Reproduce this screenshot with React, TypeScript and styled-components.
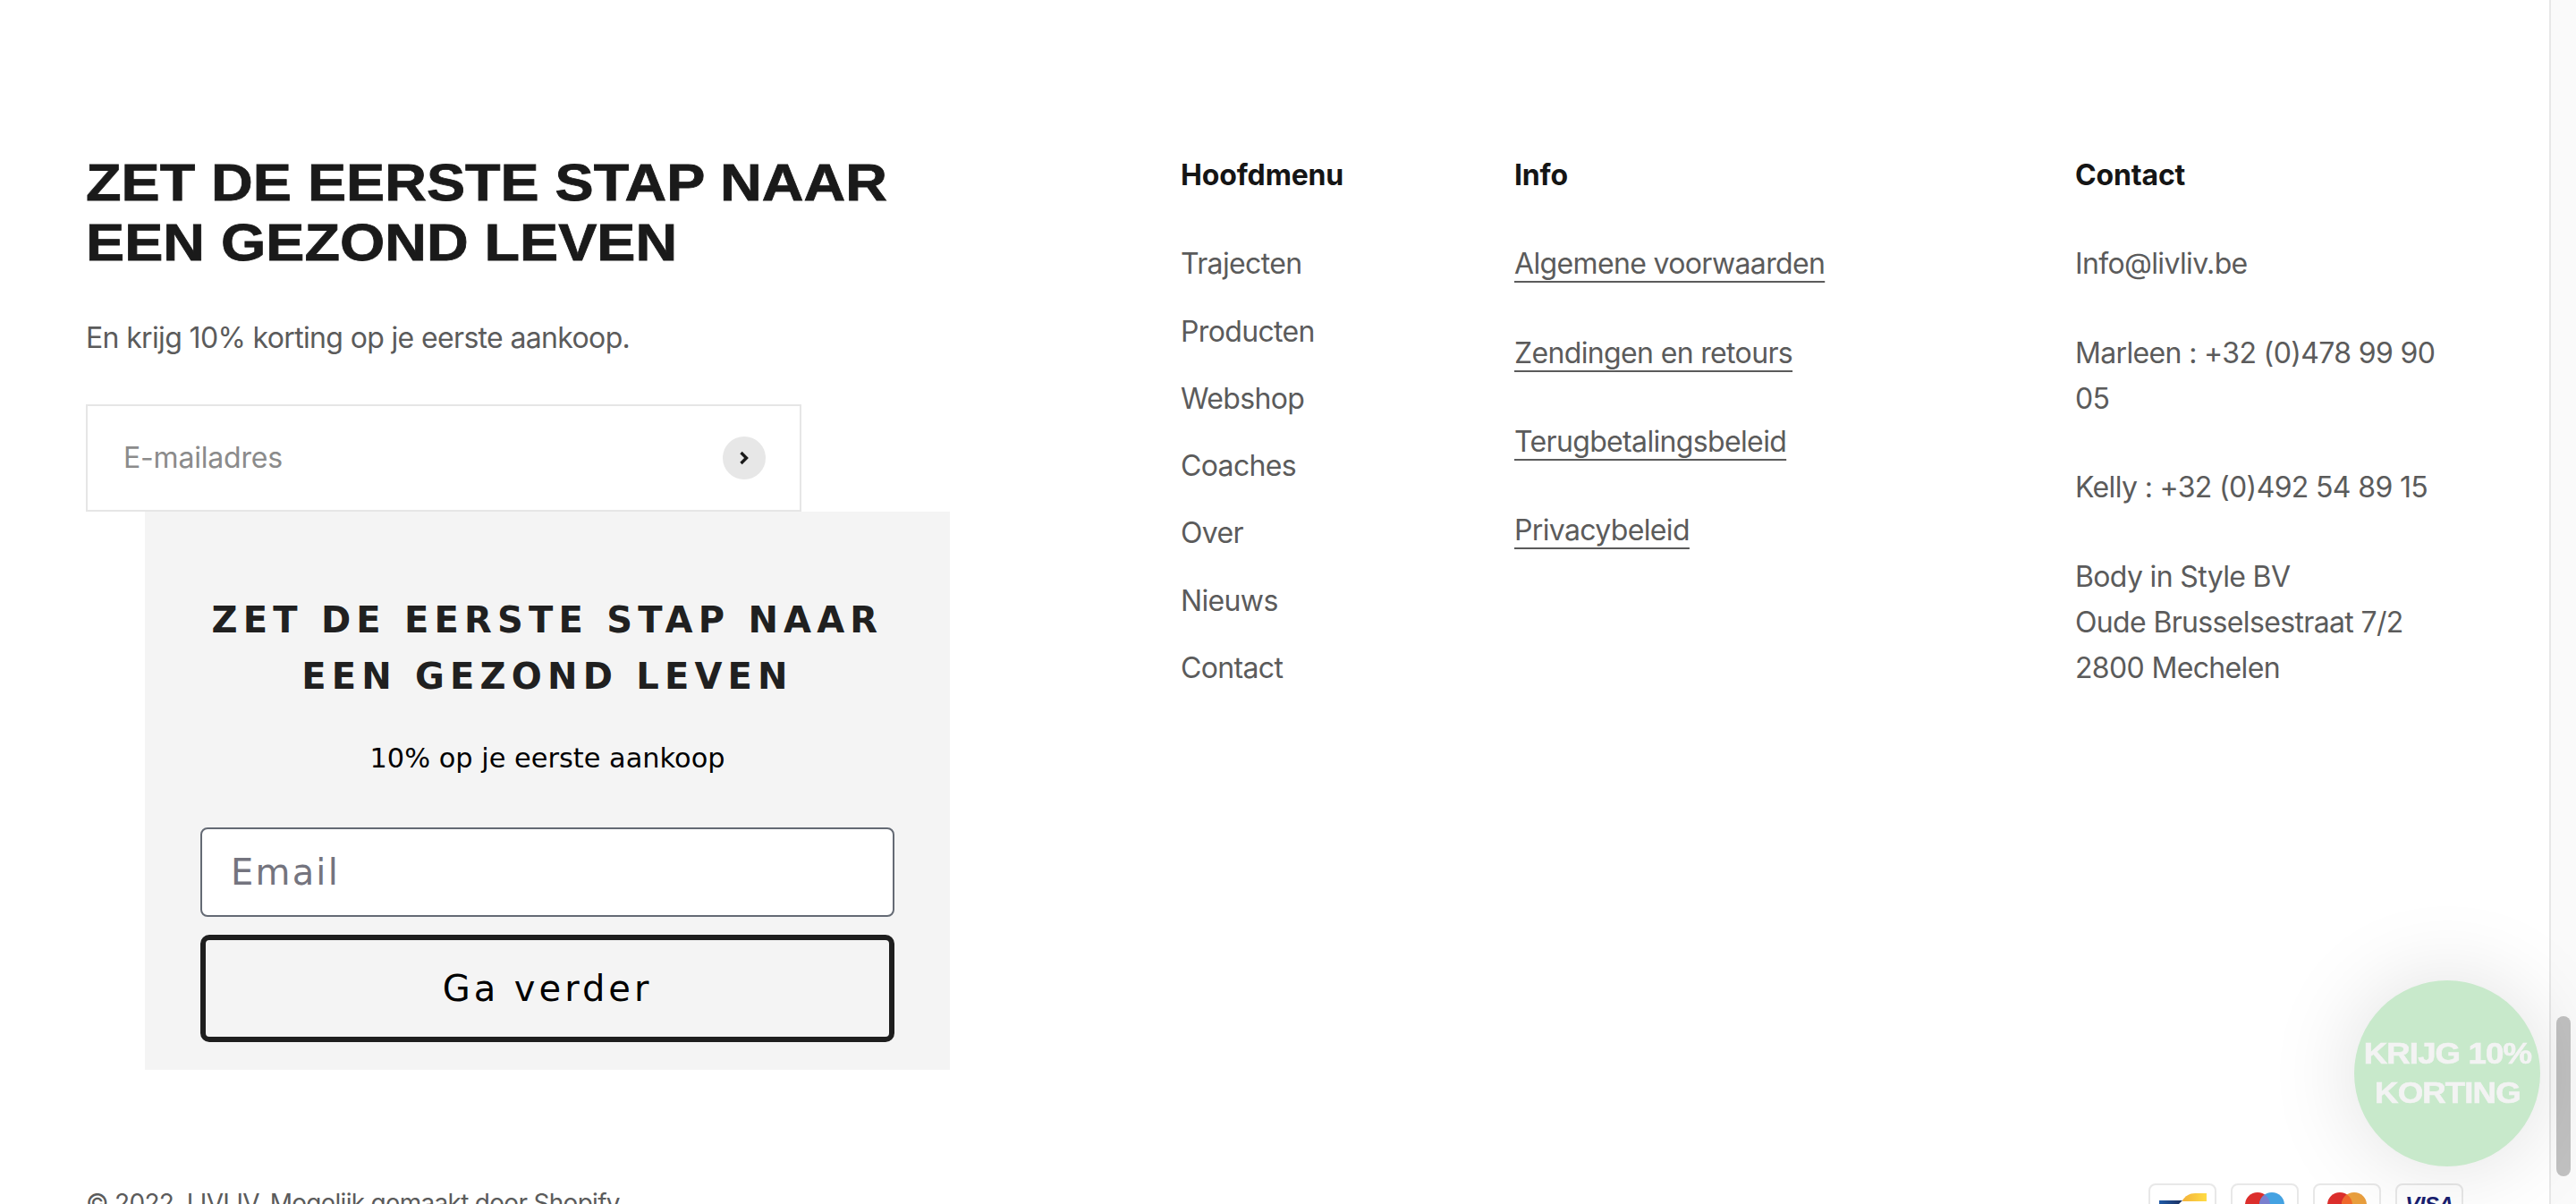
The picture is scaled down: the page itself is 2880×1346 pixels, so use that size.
import React from "react";
import styled, { createGlobalStyle } from "styled-components";

const Global = createGlobalStyle`
  html, body { margin: 0; padding: 0; height: 1346px; overflow: hidden; background: #fff; }
  * { box-sizing: border-box; }
  body { font-family: Inter, "Liberation Sans", sans-serif; }
`;

const Viewport = styled.div`
  display: flex;
  width: 2880px;
  height: 1346px;
  overflow: hidden;
`;
const Main = styled.main`
  width: 2850px;
  flex: none;
  padding: 170px 96px 0;
  font-size: 32px;
  line-height: 51.2px;
  letter-spacing: -0.65px;
  color: #5b5b5b;
`;
const Columns = styled.div`
  display: flex;
  align-items: flex-start;
`;
const Newsletter = styled.section`
  width: 1224px;
  flex: none;
`;
const BigHeading = styled.h2`
  margin: 0;
  font-family: "Liberation Sans", Arial, sans-serif;
  font-weight: 700;
  font-size: 58px;
  line-height: 67.2px;
  letter-spacing: 0;
  color: #1a1a1a;
  -webkit-text-stroke: 0.8px #1a1a1a;
  transform: scaleX(1.115);
  transform-origin: left center;
  white-space: nowrap;
`;
const Lead = styled.p`
  margin: 48px 0 48px;
`;
const SignupBox = styled.form`
  width: 800px;
  height: 120px;
  border: 2px solid #e6e6e6;
  display: flex;
  align-items: center;
  justify-content: space-between;
  padding: 0 38px 0 38px;
`;
const SignupInput = styled.input`
  flex: 1;
  border: 0;
  outline: 0;
  padding: 0 2px;
  background: transparent;
  font: inherit;
  color: #5b5b5b;
  letter-spacing: -0.2px;
  &::placeholder { color: #8b8b8b; opacity: 1; }
`;
const RoundSubmit = styled.button`
  width: 48px;
  height: 48px;
  flex: none;
  border: 0;
  padding: 0;
  border-radius: 50%;
  background: #e7e7e7;
  display: flex;
  align-items: center;
  justify-content: center;
`;
const Popup = styled.div`
  width: 900px;
  height: 624px;
  margin-left: 66px;
  background: #f4f4f4;
  padding: 90px 62px 0;
  font-family: "DejaVu Sans", Verdana, sans-serif;
  text-align: center;
`;
const PopupTitle = styled.h3`
  margin: 0;
  font-size: 40px;
  line-height: 63px;
  font-weight: 700;
  letter-spacing: 6.2px;
  color: #202020;
  white-space: nowrap;
`;
const PopupSub = styled.p`
  margin: 35px 0 0;
  font-size: 30.4px;
  line-height: 50px;
  letter-spacing: 0;
  color: #000;
  white-space: nowrap;
`;
const PopupInput = styled.input`
  display: block;
  width: 100%;
  height: 100px;
  margin-top: 52px;
  padding: 0 32px;
  border: 2px solid #646a74;
  border-radius: 8px;
  background: #fff;
  font-family: inherit;
  font-size: 40px;
  letter-spacing: 2.2px;
  outline: 0;
  &::placeholder { color: #74747e; opacity: 1; }
`;
const PopupButton = styled.button`
  display: block;
  width: 100%;
  height: 120px;
  margin-top: 20px;
  border: 6px solid #1e1e1e;
  border-radius: 10px;
  background: transparent;
  font-family: inherit;
  font-size: 40px;
  letter-spacing: 4px;
  color: #000;
`;
const LinkColumn = styled.nav<{ $width: number }>`
  width: ${(p) => p.$width}px;
  flex: none;
`;
const ColumnTitle = styled.h4`
  margin: 0 0 48px;
  font-size: 32px;
  line-height: 51.2px;
  font-weight: 700;
  letter-spacing: -0.15px;
  color: #151515;
`;
const List = styled.div<{ $gap: number }>`
  display: flex;
  flex-direction: column;
  align-items: flex-start;
  gap: ${(p) => p.$gap}px;
`;
const Plain = styled.a`
  color: inherit;
  text-decoration: none;
  white-space: nowrap;
`;
const Underlined = styled.a`
  color: inherit;
  white-space: nowrap;
  text-decoration: underline;
  text-decoration-thickness: 2px;
  text-underline-offset: 8px;
`;
const Para = styled.p`
  margin: 0;
  white-space: nowrap;
`;
const BottomRow = styled.div`
  display: flex;
  justify-content: space-between;
  align-items: flex-start;
  margin-top: 127px;
`;
const Copyright = styled.div`
  font-size: 28px;
  line-height: 45px;
  letter-spacing: -0.7px;
`;
const Payments = styled.div`
  display: flex;
  gap: 16px;
`;
const PayCard = styled.div`
  width: 76px;
  height: 48px;
  border: 2px solid #e8e8e8;
  border-radius: 8px;
  background: #fff;
  overflow: hidden;
`;
const PaySvg = styled.svg`
  display: block;
  width: 72px;
  height: 44px;
`;
const ScrollTrack = styled.aside`
  flex: 1;
  background: #fafafa;
  border-left: 2px solid #e8e8e8;
  padding: 1136px 6px 0;
`;
const ScrollThumb = styled.div`
  width: 16px;
  height: 179px;
  border-radius: 8px;
  background: #c1c1c1;
`;
const Discount = styled.button`
  position: fixed;
  left: 2632px;
  top: 1096px;
  width: 208px;
  height: 208px;
  border: 0;
  padding: 0;
  border-radius: 50%;
  background: #c8e9cb;
  box-shadow: 0 0 100px rgba(0, 0, 0, 0.13);
  display: flex;
  align-items: center;
  justify-content: center;
  font-family: "Liberation Sans", Arial, sans-serif;
  font-weight: 700;
  font-size: 33px;
  line-height: 44px;
  letter-spacing: -0.8px;
  color: #f3f3f3;
  text-align: center;
`;
const DiscountText = styled.span`
  display: block;
  white-space: nowrap;
  transform: scaleX(1.11);
  -webkit-text-stroke: 0.6px #f3f3f3;
`;

const Bancontact = () => (
  <PaySvg viewBox="0 0 72 44">
    <defs>
      <linearGradient id="bcBlue" x1="0" y1="0" x2="1" y2="0">
        <stop offset="0" stopColor="#1f5aa8" />
        <stop offset="1" stopColor="#1b2f5e" />
      </linearGradient>
      <linearGradient id="bcYellow" x1="0" y1="0" x2="1" y2="0">
        <stop offset="0" stopColor="#f3b23a" />
        <stop offset="1" stopColor="#ffdc45" />
      </linearGradient>
    </defs>
    <path d="M10 17h26l-9 9H10z" fill="url(#bcBlue)" />
    <path d="M36 17c3-5 8-8 14-8h13v9H36z" fill="url(#bcYellow)" />
  </PaySvg>
);
const Maestro = () => (
  <PaySvg viewBox="0 0 72 44">
    <circle cx="28" cy="22" r="14" fill="#dc2e2c" />
    <circle cx="44" cy="22" r="14" fill="#44a2e2" />
    <path d="M36 10.500a14 14 0 0 1 0 23a14 14 0 0 1 0-23z" fill="#7a7fce" />
  </PaySvg>
);
const Mastercard = () => (
  <PaySvg viewBox="0 0 72 44">
    <circle cx="28" cy="22" r="14" fill="#dc2e2c" />
    <circle cx="44" cy="22" r="14" fill="#e99f3e" />
    <path d="M36 10.500a14 14 0 0 1 0 23a14 14 0 0 1 0-23z" fill="#f0682c" />
  </PaySvg>
);
const Visa = () => (
  <PaySvg viewBox="0 0 72 44">
    <text x="36" y="30" textAnchor="middle" fontFamily="Liberation Sans" fontWeight="700" fontStyle="italic" fontSize="24" fill="#1a1f71">VISA</text>
  </PaySvg>
);

const menu = ["Trajecten", "Producten", "Webshop", "Coaches", "Over", "Nieuws", "Contact"];
const info = ["Algemene voorwaarden", "Zendingen en retours", "Terugbetalingsbeleid", "Privacybeleid"];

export default function App() {
  return (
    <>
      <Global />
      <Viewport>
        <Main>
          <Columns>
            <Newsletter>
              <BigHeading>ZET DE EERSTE STAP NAAR<br />EEN GEZOND LEVEN</BigHeading>
              <Lead>En krijg 10% korting op je eerste aankoop.</Lead>
              <SignupBox>
                <SignupInput placeholder="E-mailadres" />
                <RoundSubmit aria-label="Verzenden">
                  <svg width="12" height="16" viewBox="0 0 12 16" fill="none">
                    <path d="M2.500 2l6 6-6 6" stroke="#1a1a1a" strokeWidth="3.400" />
                  </svg>
                </RoundSubmit>
              </SignupBox>
              <Popup>
                <PopupTitle>ZET DE EERSTE STAP NAAR<br />EEN GEZOND LEVEN</PopupTitle>
                <PopupSub>10% op je eerste aankoop</PopupSub>
                <PopupInput placeholder="Email" />
                <PopupButton>Ga verder</PopupButton>
              </Popup>
            </Newsletter>
            <LinkColumn $width={373}>
              <ColumnTitle>Hoofdmenu</ColumnTitle>
              <List $gap={24.100}>
                {menu.map((m) => <Plain key={m}>{m}</Plain>)}
              </List>
            </LinkColumn>
            <LinkColumn $width={627}>
              <ColumnTitle>Info</ColumnTitle>
              <List $gap={48.200}>
                {info.map((m) => <Underlined key={m}>{m}</Underlined>)}
              </List>
            </LinkColumn>
            <LinkColumn $width={434}>
              <ColumnTitle>Contact</ColumnTitle>
              <List $gap={48.200}>
                <Para>Info@livliv.be</Para>
                <Para>Marleen : +32 (0)478 99 90<br />05</Para>
                <Para>Kelly : +32 (0)492 54 89 15</Para>
                <Para>Body in Style BV<br />Oude Brusselsestraat 7/2<br />2800 Mechelen</Para>
              </List>
            </LinkColumn>
          </Columns>
          <BottomRow>
            <Copyright>© 2022, LIVLIV. Mogelijk gemaakt door Shopify</Copyright>
            <Payments>
              <PayCard><Bancontact /></PayCard>
              <PayCard><Maestro /></PayCard>
              <PayCard><Mastercard /></PayCard>
              <PayCard><Visa /></PayCard>
            </Payments>
          </BottomRow>
        </Main>
        <ScrollTrack><ScrollThumb /></ScrollTrack>
      </Viewport>
      <Discount>
        <DiscountText>KRIJG 10%<br />KORTING</DiscountText>
      </Discount>
    </>
  );
}
